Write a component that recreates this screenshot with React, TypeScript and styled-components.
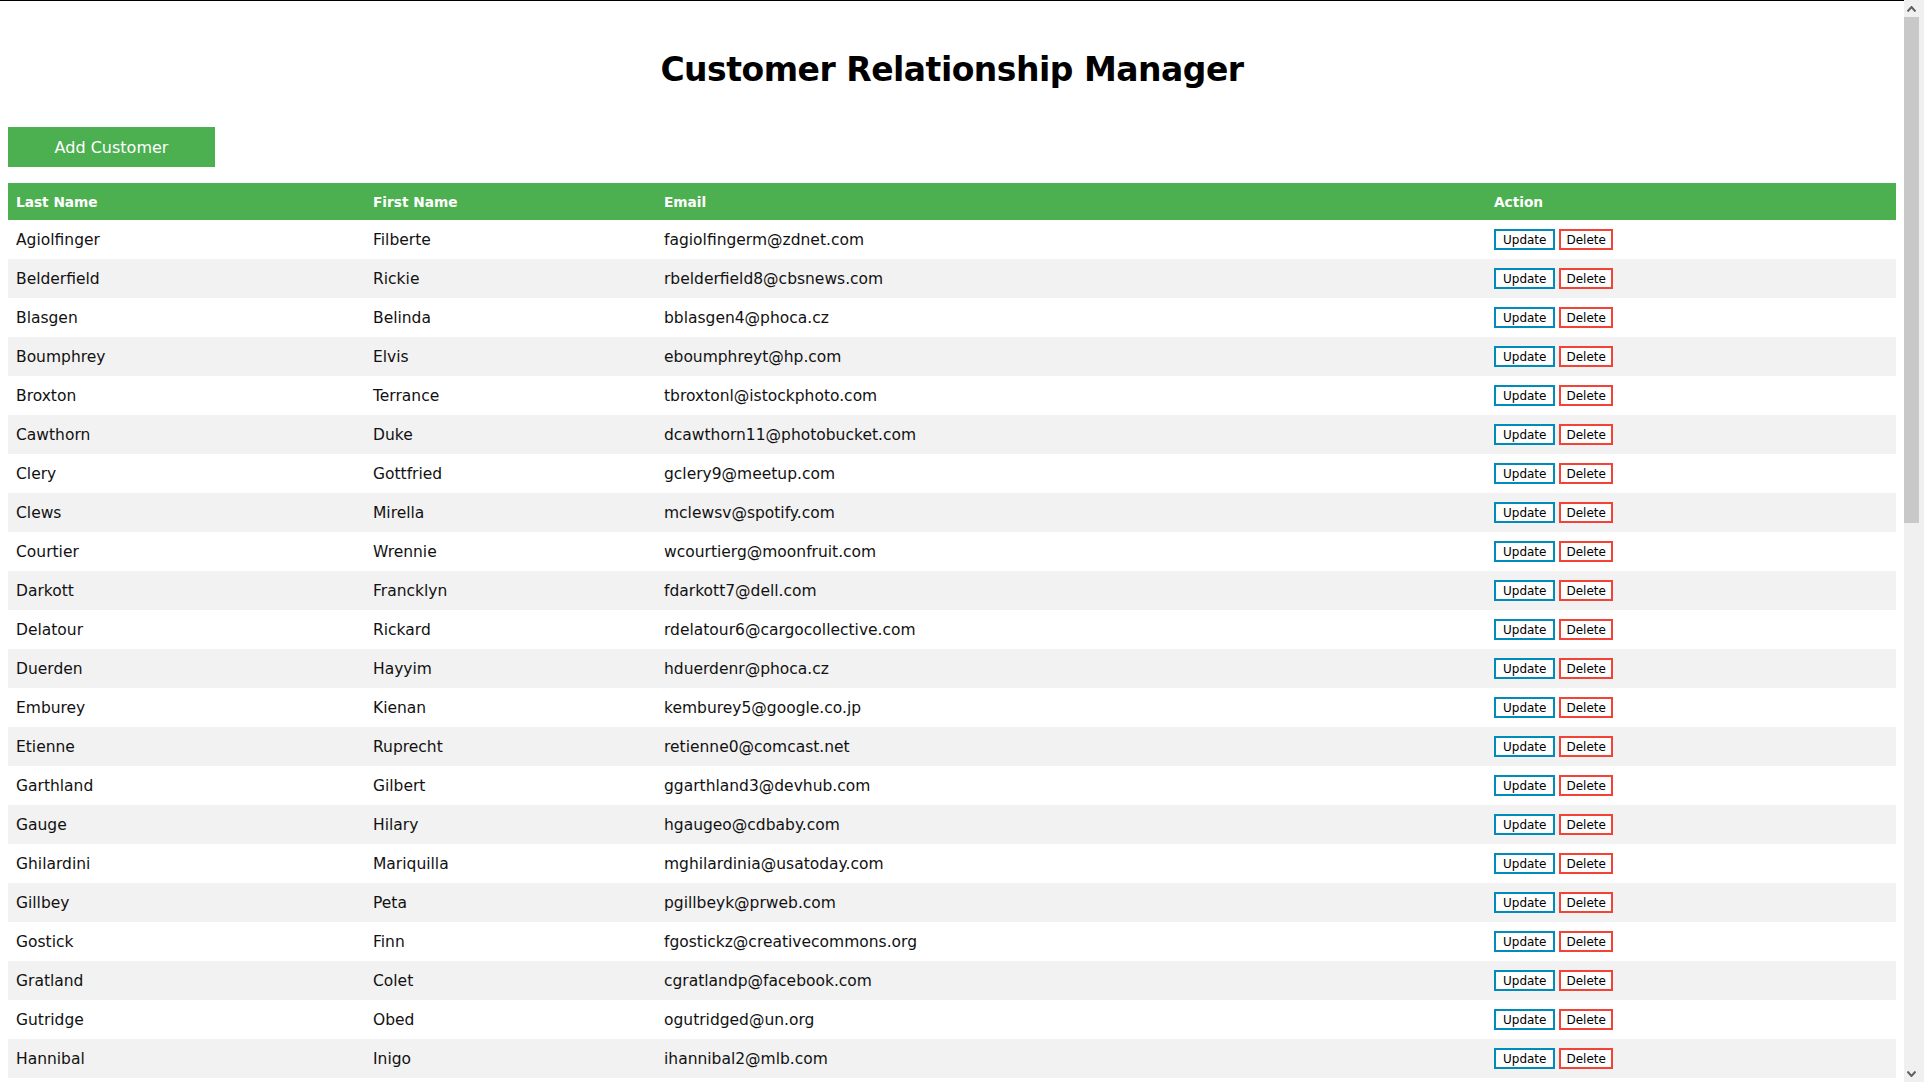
import React from "react";
import styled, { createGlobalStyle } from "styled-components";

const GlobalStyle = createGlobalStyle`
  html, body {
    margin: 0;
    padding: 0;
    height: 100%;
    overflow: hidden;
    background: #ffffff;
  }
  body {
    font-family: "DejaVu Sans", "Liberation Sans", sans-serif;
    color: #111;
  }
`;

const Shell = styled.div`
  display: flex;
  flex-direction: row;
  height: 100vh;
  width: 100vw;
`;

const Main = styled.main`
  flex: 1;
  min-width: 0;
  border-top: 1px solid #000;
  padding: 0 8px;
  overflow: hidden;
`;

const Title = styled.h1`
  margin: 0;
  padding-top: 47px;
  height: 81px;
  box-sizing: border-box;
  text-align: center;
  font-size: 33px;
  line-height: 44px;
  font-weight: 700;
  color: #000;
  letter-spacing: -0.5px;
`;

const Toolbar = styled.div`
  display: flex;
  margin-top: 45px;
  margin-bottom: 16px;
`;

const AddButton = styled.button`
  width: 207px;
  height: 40px;
  border: none;
  background: #4caf50;
  color: #fff;
  font-family: inherit;
  font-size: 16px;
  cursor: pointer;
`;

const Table = styled.table`
  width: 1888px;
  border-collapse: collapse;
  table-layout: fixed;
`;

const HeadCell = styled.th<{ $w: number }>`
  width: ${(p) => p.$w}px;
  background: #4caf50;
  color: #fff;
  text-align: left;
  font-size: 13.7px;
  font-weight: 700;
  height: 37px;
  padding: 0 8px;
  box-sizing: border-box;
`;

const BodyRow = styled.tr`
  height: 39px;
  &:nth-child(even) {
    background: #f2f2f2;
  }
`;

const Cell = styled.td`
  padding: 0 8px;
  font-size: 15.5px;
  color: #111;
  white-space: nowrap;
`;

const Actions = styled.div`
  display: flex;
  gap: 4px;
  align-items: center;
`;

const ActionButton = styled.button<{ $tone: "blue" | "red" }>`
  height: 21px;
  padding: 0 ${(p) => (p.$tone === "blue" ? 7 : 5)}px;
  background: #fff;
  border: 2px solid ${(p) => (p.$tone === "blue" ? "#008cba" : "#f44336")};
  color: #000;
  font-family: inherit;
  font-size: 12px;
  cursor: pointer;
  box-sizing: border-box;
`;

const Scrollbar = styled.div`
  width: 20px;
  height: 100vh;
  background: #f0f0f0;
  display: flex;
  flex-direction: column;
`;

const ArrowBox = styled.div`
  height: 17px;
  width: 15px;
  display: flex;
  align-items: center;
  justify-content: center;
`;

const Thumb = styled.div`
  width: 15px;
  height: 506px;
  background: #c8c8c8;
`;

const Track = styled.div`
  flex: 1;
`;

type Customer = [string, string, string];

const customers: Customer[] = [
  ["Agiolfinger", "Filberte", "fagiolfingerm@zdnet.com"],
  ["Belderfield", "Rickie", "rbelderfield8@cbsnews.com"],
  ["Blasgen", "Belinda", "bblasgen4@phoca.cz"],
  ["Boumphrey", "Elvis", "eboumphreyt@hp.com"],
  ["Broxton", "Terrance", "tbroxtonl@istockphoto.com"],
  ["Cawthorn", "Duke", "dcawthorn11@photobucket.com"],
  ["Clery", "Gottfried", "gclery9@meetup.com"],
  ["Clews", "Mirella", "mclewsv@spotify.com"],
  ["Courtier", "Wrennie", "wcourtierg@moonfruit.com"],
  ["Darkott", "Francklyn", "fdarkott7@dell.com"],
  ["Delatour", "Rickard", "rdelatour6@cargocollective.com"],
  ["Duerden", "Hayyim", "hduerdenr@phoca.cz"],
  ["Emburey", "Kienan", "kemburey5@google.co.jp"],
  ["Etienne", "Ruprecht", "retienne0@comcast.net"],
  ["Garthland", "Gilbert", "ggarthland3@devhub.com"],
  ["Gauge", "Hilary", "hgaugeo@cdbaby.com"],
  ["Ghilardini", "Mariquilla", "mghilardinia@usatoday.com"],
  ["Gillbey", "Peta", "pgillbeyk@prweb.com"],
  ["Gostick", "Finn", "fgostickz@creativecommons.org"],
  ["Gratland", "Colet", "cgratlandp@facebook.com"],
  ["Gutridge", "Obed", "ogutridged@un.org"],
  ["Hannibal", "Inigo", "ihannibal2@mlb.com"],
];

const Chevron = ({ up }: { up: boolean }) => (
  <svg width="9" height="6" viewBox="0 0 9 6">
    <path
      d={up ? "M0.5 5.5 L4.5 1 L8.5 5.5" : "M0.5 0.5 L4.5 5 L8.5 0.5"}
      fill="none"
      stroke="#606060"
      strokeWidth="2"
    />
  </svg>
);

export default function App() {
  return (
    <>
      <GlobalStyle />
      <Shell>
        <Main>
          <Title>Customer Relationship Manager</Title>
          <Toolbar>
            <AddButton>Add Customer</AddButton>
          </Toolbar>
          <Table>
            <thead>
              <tr>
                <HeadCell $w={357}>Last Name</HeadCell>
                <HeadCell $w={291}>First Name</HeadCell>
                <HeadCell $w={830}>Email</HeadCell>
                <HeadCell $w={410}>Action</HeadCell>
              </tr>
            </thead>
            <tbody>
              {customers.map(([last, first, email]) => (
                <BodyRow key={email}>
                  <Cell>{last}</Cell>
                  <Cell>{first}</Cell>
                  <Cell>{email}</Cell>
                  <Cell>
                    <Actions>
                      <ActionButton $tone="blue">Update</ActionButton>
                      <ActionButton $tone="red">Delete</ActionButton>
                    </Actions>
                  </Cell>
                </BodyRow>
              ))}
            </tbody>
          </Table>
        </Main>
        <Scrollbar>
          <ArrowBox>
            <Chevron up />
          </ArrowBox>
          <Thumb />
          <Track />
          <ArrowBox>
            <Chevron up={false} />
          </ArrowBox>
        </Scrollbar>
      </Shell>
    </>
  );
}
